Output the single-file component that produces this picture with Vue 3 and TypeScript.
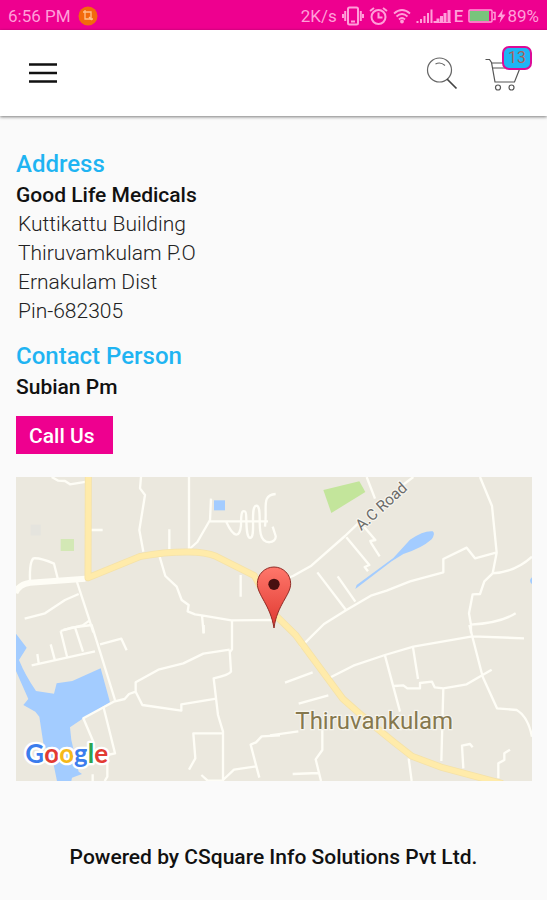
<script setup lang="ts">
const shopName = 'Good Life Medicals'
const addressLines: string[] = ['Kuttikattu Building', 'Thiruvamkulam P.O', 'Ernakulam Dist', 'Pin-682305']
const contactPerson = 'Subian Pm'
const cartCount = 13

interface LogoLetter {
  char: string
  tone: string
}
const logo: LogoLetter[] = [
  { char: 'G', tone: 'blue' },
  { char: 'o', tone: 'red' },
  { char: 'o', tone: 'yellow' },
  { char: 'g', tone: 'blue' },
  { char: 'l', tone: 'green' },
  { char: 'e', tone: 'red' },
]
</script>

<template>
  <div class="screen">
    <div class="status">
      <div class="status-group">
        <span>6:56 PM</span>
        <svg class="app-dot" width="20" height="20" viewBox="0 0 20 20" aria-hidden="true">
          <circle cx="10" cy="10" r="9.5" fill="#f26a0c" />
          <path d="M5 6h8v8M7 4v9h8M11 11l3 3" fill="none" stroke="#ffc08a" stroke-width="1.3" />
        </svg>
      </div>
      <div class="status-group right">
        <span>2K/s</span>
        <svg width="22" height="20" viewBox="0 0 22 20" fill="none" stroke="currentColor" stroke-width="2" aria-hidden="true">
          <rect x="6" y="1.5" width="10" height="17" rx="1.5" />
          <path d="M9 15.5h4M3.2 5v10M18.8 5v10M1 8v4M21 8v4" />
        </svg>
        <svg width="19" height="20" viewBox="0 0 19 20" fill="none" stroke="currentColor" stroke-width="2" aria-hidden="true">
          <circle cx="9.5" cy="11" r="7" />
          <path d="M1 5l4-3M18 5l-4-3M9.5 6.5v5h4" />
        </svg>
        <svg width="18" height="16" viewBox="0 0 18 16" fill="none" stroke="currentColor" stroke-width="1.8" aria-hidden="true">
          <path d="M1 5.5Q9-1.5 17 5.5M3.5 8.5Q9 3.5 14.5 8.5M6 11.5Q9 8.5 12 11.5" />
          <circle cx="9" cy="13.5" r="1" fill="currentColor" />
        </svg>
        <svg width="37" height="16" viewBox="0 0 37 16" stroke="currentColor" aria-hidden="true">
          <path d="M1.5 15v-2M5 15v-4M8.5 15V8M12 15V5M15.5 15V1.5" stroke-width="2" />
          <path d="M19 15v-2M22 15v-4.5M25.5 15V8M29 15V5M33 15V2" stroke-width="3" />
          <path d="M19 14.5h16" stroke-width="1" />
        </svg>
        <span class="network">E</span>
        <svg class="battery" width="28" height="14" viewBox="0 0 28 14" aria-hidden="true">
          <rect x="1" y="1" width="23" height="12" rx="1" fill="#ee008f" stroke="currentColor" stroke-width="1.5" />
          <rect x="2" y="2" width="19" height="10" fill="#78c47c" />
          <path d="M25 3.5h2v7h-2" fill="none" stroke="currentColor" stroke-width="1.5" />
        </svg>
        <svg width="9" height="16" viewBox="0 0 9 16" aria-hidden="true">
          <path d="M6 1L0.5 9H4L2.5 15L8.5 6.5H5Z" fill="currentColor" />
        </svg>
        <span>89%</span>
      </div>
    </div>

    <header class="toolbar">
      <button class="icon-button" type="button" aria-label="Menu">
        <svg width="30" height="22" viewBox="0 0 30 22" aria-hidden="true">
          <path d="M1 2.5h28M1 11h28M1 19.5h28" stroke="#111" stroke-width="2.5" />
        </svg>
      </button>
      <div class="actions">
        <button class="icon-button" type="button" aria-label="Search">
          <svg width="32" height="34" viewBox="0 0 32 34" fill="none" stroke="#666" aria-hidden="true">
            <circle cx="13.5" cy="14" r="12" stroke-width="1.2" />
            <path d="M9.5 8q5-2.500 9.500 1.500" stroke-width="1.1" />
            <path d="M21 23l9.500 9.500" stroke="#444" stroke-width="1.7" />
          </svg>
        </button>
        <button class="icon-button cart" type="button" aria-label="Cart">
          <svg width="36" height="34" viewBox="0 0 36 34" fill="none" stroke="#555" stroke-width="1.2" aria-hidden="true">
            <path d="M0.500 1.500h4l2 3L10 24h19.500L35 10M6.500 5H20M7 10H20" />
            <circle cx="13" cy="29.500" r="2.500" />
            <circle cx="26.500" cy="29.500" r="2.500" />
          </svg>
          <span class="badge">{{ cartCount }}</span>
        </button>
      </div>
    </header>

    <main class="content">
      <section>
        <h2>Address</h2>
        <p class="strong">{{ shopName }}</p>
        <address>
          <span v-for="line in addressLines" :key="line">{{ line }}</span>
        </address>
      </section>

      <section class="contact">
        <h2>Contact Person</h2>
        <p class="strong">{{ contactPerson }}</p>
        <button class="call" type="button">Call Us</button>
      </section>

      <svg class="map" viewBox="0 0 1548 912" role="img" aria-label="Map of Thiruvankulam">
        <defs>
          <linearGradient id="pin" x1="0" y1="0" x2="0" y2="1">
            <stop offset="0" stop-color="#ff776b" />
            <stop offset="1" stop-color="#df3830" />
          </linearGradient>
        </defs>
        <rect width="1548" height="912" fill="#ebe8de" />

        <path transform="translate(-18 -21)" d="M152 207h40v36h-40z" fill="#d3e8b5" />
        <path transform="translate(-18 -21)" d="M62 164h30v32h-30z" fill="#e5e4de" />
        <path transform="translate(762 -21)" d="M160 60L268 34L286 66L184 129Z" fill="#c3e59b" />

        <g fill="#a3ccff">
          <path transform="translate(-18 -21)" d="M612 91h33v30h-33z" />
          <path transform="translate(762 -21)" d="M256 357L260 345L370 264L420 209Q462 181 488 184Q497 190 485 208Q455 235 400 252L365 274Z" />
          <path transform="translate(762 -21)" d="M786 322Q774 332 786 343Z" />
          <path transform="translate(-18 444)" d="M18 26L50 68L27 105Q45 150 78 198L132 206L140 175L187 168L272 130L300 232L220 280L180 307L184 345L206 440L216 447L186 458L184 468H141L130 415L100 355L88 275L76 260L40 240L55 222L18 138Z" />
        </g>

        <g class="road">
          <g transform="translate(-18 -21)">
            <path d="M125 21L145 32L165 33L180 43L235 34M235 180H278M393 21L390 55L405 75L388 180L400 245M537 21V238M478 178V240M603 86L600 150L562 216L535 240M600 154H774M648 154C672 207 690 204 693 165C693 120 698 122 704 124C714 124 703 198 720 204C740 203 718 110 739 107C755 107 745 160 752 191C760 228 800 220 797 198L788 170M797 72C752 75 773 115 765 170" />
            <path d="M60 330Q58 277 70 265Q92 263 132 281L143 325M200 333L235 440L250 487M206 372L165 390L105 430L44 446M238 452L218 466L160 480" />
            <path d="M448 257L466 318L500 350L515 390L536 405L533 424L555 433L580 437L664 451L792 450M692 315V380M576 437L581 490M666 453V538L659 547" />
          </g>
          <g transform="translate(762 -21)">
            <path d="M-10 360Q30 330 69 318L124 287L225 198L270 155M385 55L430 21M290 21L315 86M229 202L298 285L284 291L294 304M282 170L316 210L301 213L304 220L329 259M142 307L228 420M203 319L256 395M630 21L666 108L680 248L668 310L643 334L630 372L608 373L597 430L603 465V490M678 248L615 265L590 233L520 267V307L420 334L350 362L305 376L228 421L162 462L91 532M665 310Q735 307 786 260M602 464Q690 459 737 430" />
          </g>
          <g transform="translate(-18 444)">
            <path d="M65 121L255 79M82 87L86 114M122 58L134 103M152 18L172 98M152 18L185 8L245 0L270 80L315 225M196 10L219 80M270 58L334 41L350 76M581 0V25M659 74L580 86L520 115L445 134L377 172V200L397 240L514 257V238L619 221M377 200L357 207L344 222L311 230L220 280L250 350M281 248L315 385L292 390V455L284 468M659 75L663 140Q657 150 611 160L624 270L639 320V468M639 325H550L556 400L537 434M639 465L672 434L739 424L748 458M810 331L755 334L738 352L722 359L739 424M574 450L593 467L639 466M248 448V470" />
          </g>
          <g transform="translate(762 444)">
            <path d="M45 173L128 142M170 163L250 122L345 90L430 65L607 34L762 40M345 92L390 260M429 67L444 162M372 183L400 181L412 190H450V174L486 170L494 187L520 190L590 178L665 134M598 0L638 155L681 250L740 255Q774 275 786 335M520 190L514 408M86 236L175 211M0 331L85 319M157 315V375L137 403L153 468M68 447L145 444M416 400L425 468M580 430L576 362L600 357L608 367M685 460V415L703 405V385L720 374" />
          </g>
          <path class="wide" d="M-2 348Q8 322 42 317L208 305" />
        </g>
        <path class="highway-edge" d="M217 -5L216 302L374 238Q450 224 520 225Q568 225 600 238L715 296L780 416L838 473L980 665Q1080 755 1188 838L1280 872L1460 920" />
        <path class="highway" d="M217 -5L216 302L374 238Q450 224 520 225Q568 225 600 238L715 296L780 416L838 473L980 665Q1080 755 1188 838L1280 872L1460 920" />

        <path d="M774 453C763 384 724 354 724 320A50 50 0 0 1 824 320C824 354 783 384 774 453Z" fill="url(#pin)" stroke="#912d27" stroke-width="3" />
        <circle cx="774" cy="322" r="17" fill="#471010" />

        <text class="street" transform="translate(1036 163) rotate(-42)">A.C Road</text>
        <text class="town" x="838" y="757">Thiruvankulam</text>
        <text class="logo" x="28" y="859"><tspan v-for="(letter, i) in logo" :key="i" :class="letter.tone">{{ letter.char }}</tspan></text>
      </svg>
    </main>

    <footer>Powered by CSquare Info Solutions Pvt Ltd.</footer>
  </div>
</template>

<style>
body {
  margin: 0;
  background: #fafafa;
}
</style>

<style scoped>
.screen {
  min-height: 100vh;
  background: #fafafa;
  color: #111;
  font-family: Roboto, "Liberation Sans", sans-serif;
}
.status {
  display: flex;
  justify-content: space-between;
  align-items: center;
  height: 30px;
  padding: 2px 8px 0;
  box-sizing: border-box;
  background: #ee008f;
  color: #ff9fd9;
  font-size: 17px;
  line-height: 28px;
  white-space: nowrap;
}
.status-group {
  display: flex;
  align-items: center;
  gap: 7px;
}
.right {
  gap: 5px;
}
.network {
  font-weight: 500;
}
.right svg + span {
  margin-left: -4px;
}
.battery + svg {
  margin-left: -4px;
}
.toolbar {
  display: flex;
  justify-content: space-between;
  align-items: center;
  height: 86px;
  padding: 0 26px 0 28px;
  box-sizing: border-box;
  background: #fff;
  box-shadow: 0 1px 3px rgba(0, 0, 0, 0.5);
}
.actions {
  display: flex;
  align-items: center;
  gap: 27px;
}
.icon-button {
  position: relative;
  display: block;
  padding: 0;
  border: 0;
  background: none;
}
.icon-button svg {
  display: block;
}
.cart {
  padding-top: 4px;
}
.badge {
  position: absolute;
  top: -8px;
  right: -11px;
  width: 30px;
  height: 24px;
  border: 2px solid #dc0b97;
  border-radius: 7px;
  box-sizing: border-box;
  background: #1db5f5;
  color: #a8625c;
  font: 16px/20px Roboto, sans-serif;
  text-align: center;
}
.content {
  padding: 32px 15px 0 16px;
}
h2 {
  margin: 0;
  color: #1fb4f2;
  font-size: 24px;
  font-weight: 500;
  line-height: 32px;
}
.strong {
  margin: 0;
  padding-top: 1px;
  font-size: 21px;
  font-weight: 500;
  line-height: 29px;
}
address {
  display: flex;
  flex-direction: column;
  padding-left: 2px;
  color: #222;
  font-size: 21px;
  font-style: normal;
  font-weight: 300;
  line-height: 29px;
}
.contact {
  margin-top: 14px;
}
.call {
  display: block;
  height: 38px;
  margin-top: 14px;
  padding: 0 18px 0 13px;
  border: 0;
  background: #ee008f;
  color: #fff;
  font: 500 21px/40px Roboto, sans-serif;
}
.map {
  display: block;
  width: 100%;
  height: auto;
  margin-top: 23px;
}
.road {
  fill: none;
  stroke: #fefdf6;
  stroke-width: 7;
  stroke-linejoin: round;
}
.wide {
  stroke-width: 18;
}
.highway-edge,
.highway {
  fill: none;
  stroke-linejoin: round;
}
.highway-edge {
  stroke: #f5e2a8;
  stroke-width: 21;
}
.highway {
  stroke: #ffebaa;
  stroke-width: 16;
}
.street,
.town {
  paint-order: stroke;
  stroke: #f7f5ee;
  stroke-width: 7;
}
.street {
  fill: #6b6b69;
  font-size: 46px;
}
.town {
  fill: #85784e;
  font-size: 72px;
}
.logo {
  paint-order: stroke;
  stroke: #fff;
  stroke-width: 14;
  stroke-linejoin: round;
  font-family: Lato, sans-serif;
  font-size: 78px;
  font-weight: 700;
}
.blue {
  fill: #3b7ded;
}
.red {
  fill: #e23b33;
}
.yellow {
  fill: #f5b91a;
}
.green {
  fill: #2da44f;
}
footer {
  padding: 61px 16px 28px;
  font-size: 21px;
  font-weight: 500;
  line-height: 30px;
  text-align: center;
}
</style>
